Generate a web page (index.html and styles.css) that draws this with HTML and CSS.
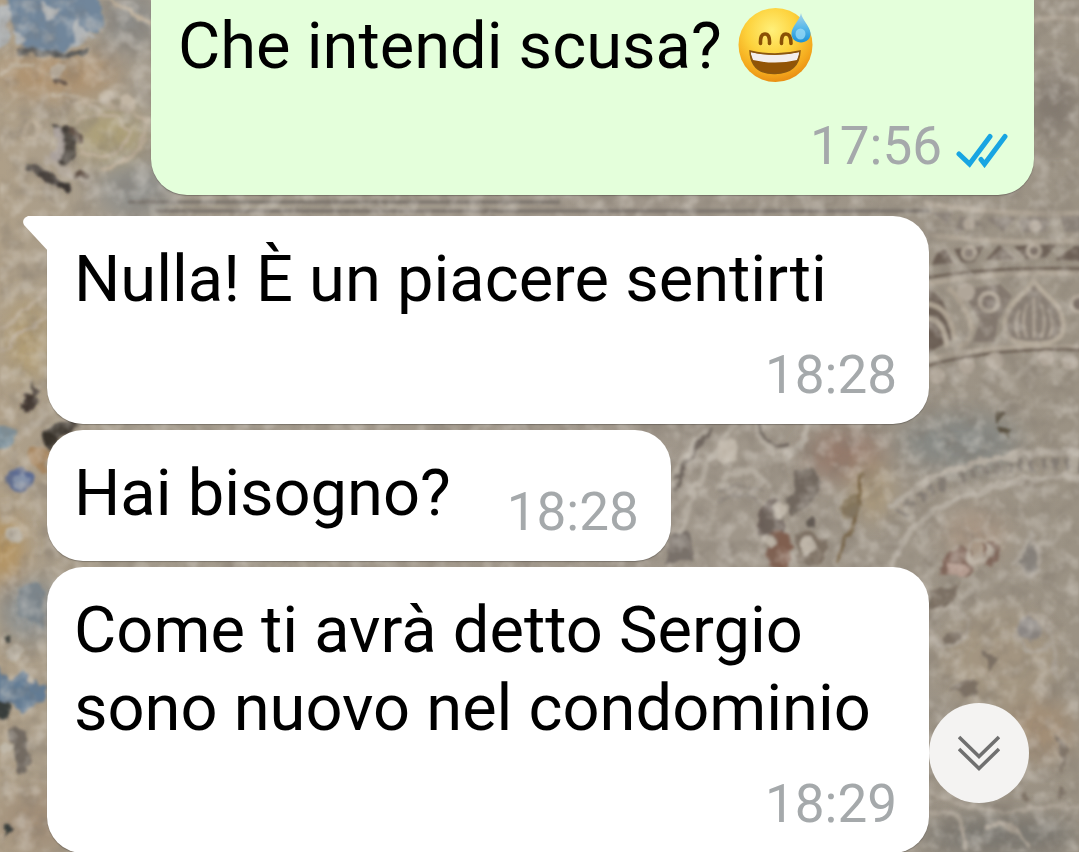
FILE: index.html
```html
<!DOCTYPE html>
<html lang="it">
<head>
<meta charset="utf-8">
<meta name="viewport" content="width=device-width, initial-scale=1">
<title>Chat</title>
<link rel="stylesheet" href="styles.css">
</head>
<body>
<svg class="wallpaper" viewBox="0 0 1079 852" preserveAspectRatio="xMidYMid slice" aria-hidden="true">
  <defs>
    <linearGradient id="stone" x1="0" x2="1" y1="0" y2="0">
      <stop offset="0" stop-color="#ae9f88"/><stop offset=".12" stop-color="#a59c8d"/>
      <stop offset=".6" stop-color="#a0978b"/><stop offset="1" stop-color="#9b9284"/>
    </linearGradient>
    <filter id="soft" x="-20%" y="-20%" width="140%" height="140%"><feGaussianBlur stdDeviation="1.4"/></filter>
    <filter id="wash" x="-40%" y="-40%" width="180%" height="180%"><feGaussianBlur stdDeviation="12"/></filter>
    <filter id="rough" filterUnits="userSpaceOnUse" x="-20" y="-20" width="1119" height="892">
      <feTurbulence type="fractalNoise" baseFrequency=".07" numOctaves="3" seed="4" result="n"/>
      <feDisplacementMap in="SourceGraphic" in2="n" scale="12" xChannelSelector="R" yChannelSelector="G"/>
      <feGaussianBlur stdDeviation="1.7"/>
    </filter>
    <filter id="mottle" x="0" y="0" width="100%" height="100%">
      <feTurbulence type="fractalNoise" baseFrequency=".05" numOctaves="4" seed="9"/>
      <feColorMatrix values="0 0 0 0 .2  0 0 0 0 .17  0 0 0 0 .14  2.4 0 0 0 -1.05"/>
      <feGaussianBlur stdDeviation="1.2"/>
    </filter>
    <filter id="chalk" x="0" y="0" width="100%" height="100%">
      <feTurbulence type="fractalNoise" baseFrequency=".06" numOctaves="3" seed="23"/>
      <feColorMatrix values="0 0 0 0 .8  0 0 0 0 .76  0 0 0 0 .7  0 2.6 0 0 -1.15"/>
      <feGaussianBlur stdDeviation="1.2"/>
    </filter>
    <g id="petal">
      <path d="M0-38C-7-22-32-16-29 12Q-27 26 0 26T29 12C32-16 7-22 0-38Z" fill="#8b8177" stroke="#b6ab9b" stroke-width="5"/>
      <path d="M0-20V20M-7-14Q-14 4-7 20M7-14Q14 4 7 20M-14-8Q-22 6-15 19M14-8Q22 6 15 19" fill="none" stroke="#b1a698" stroke-width="2.5"/>
    </g>
  </defs>
  <rect width="1079" height="852" fill="url(#stone)"/>
  <g filter="url(#wash)">
    <ellipse cx="60" cy="75" rx="60" ry="22" fill="#b08b62" opacity=".7"/>
    <ellipse cx="110" cy="135" rx="34" ry="26" fill="#ada078"/>
    <ellipse cx="135" cy="190" rx="38" ry="28" fill="#8f8f8b"/>
    <ellipse cx="130" cy="20" rx="30" ry="30" fill="#8d8c88"/>
    <ellipse cx="28" cy="340" rx="16" ry="40" fill="#b39d70"/>
    <ellipse cx="5" cy="550" rx="14" ry="35" fill="#b58f52"/>
    <ellipse cx="30" cy="610" rx="30" ry="30" fill="#8b9193"/>
    <ellipse cx="960" cy="442" rx="60" ry="28" fill="#858783"/>
    <ellipse cx="845" cy="455" rx="38" ry="24" fill="#94796b"/>
    <ellipse cx="872" cy="492" rx="18" ry="28" fill="#ae9b7b"/>
    <ellipse cx="975" cy="535" rx="30" ry="24" fill="#ac9986"/>
    <ellipse cx="1000" cy="660" rx="60" ry="50" fill="#a39581"/>
    <ellipse cx="1040" cy="730" rx="35" ry="30" fill="#a38e76"/>
    <ellipse cx="1000" cy="835" rx="80" ry="18" fill="#77746e"/>
    <ellipse cx="1055" cy="105" rx="22" ry="35" fill="#827970"/>
    <ellipse cx="40" cy="820" rx="40" ry="30" fill="#a18e78"/>
  </g>
  <g filter="url(#rough)">
    <path d="M8-5H95Q112 20 98 32L82 34 68 50Q40 58 22 46L10 20Z" fill="#71869b"/>
    <path d="M20 50Q45 58 86 52" fill="none" stroke="#535454" stroke-width="6"/>
    <path d="M40 0 60 10 50 22ZM76 14 86 34 97 38 72 46ZM10 28 26 36 18 46ZM-4 8 10 4 8 44-4 48Z" fill="#b1b5b7"/>
    <path d="M50 125Q66 140 55 163L66 170Q80 152 67 123Z" fill="#413b36"/>
    <path d="M57 127Q66 144 54 163" fill="none" stroke="#aaa19c" stroke-width="7"/>
    <path d="M31 168 66 186" stroke="#3a3430" stroke-width="9" stroke-linecap="round"/>
    <path d="M44 159 88 184" stroke="#b2a89b" stroke-width="6"/>
    <path d="M71 130 78 142M78 175 86 176M57 80 65 82" stroke="#5b4c40" stroke-width="7" stroke-linecap="round"/>
    <g fill="none" stroke="#bcad98" stroke-width="4">
      <circle cx="33" cy="131" r="8"/><path d="M50 93Q110 100 149 121M68 105Q83 98 101 111M77 125Q88 108 118 118Q137 136 118 151Q100 162 78 151M100 170Q145 160 146 124M0 75Q18 59 38 65M100-4Q126 7 152 24M0 330 48 290M0 350 48 315"/>
    </g>
    <g fill="#c2b6a4"><circle cx="106" cy="96" r="8"/><circle cx="128" cy="102" r="8"/><circle cx="57" cy="70" r="7"/></g>
    <path d="M32 380 42 391 31 402ZM25 392 40 403 27 412ZM22 400 30 406 22 410Z" fill="#423831"/>
    <path d="M42 435Q55 414 83 426L65 436 48 452Z" fill="#39322b"/>
    <path d="M30 445Q38 440 48 454V474Q36 473 28 460Z" fill="#a78660"/>
    <path d="M5 478Q15 458 31 475Q36 486 23 491Q8 493 5 478Z" fill="#5c6c94"/>
    <ellipse cx="20" cy="482" rx="8" ry="6" fill="#8492aa"/>
    <path d="M-4 424 17 430 12 448-4 446Z" fill="#7f939e"/>
    <path d="M18 590Q35 576 44 592V630L22 615Z" fill="#7b858b"/>
    <path d="M-4 667 13 680 20 670 46 687V700L20 713 10 704-4 700Z" fill="#647c94"/>
    <path d="M-4 700 10 704 8 718-4 715ZM3 636 8 634 10 640 3 643ZM3 825 14 829 3 838Z" fill="#393c3a"/>
    <path d="M10 728Q27 725 28 745 34 775 18 775Z" fill="#716960"/>
    <g fill="#c0b8a9"><circle cx="14" cy="653" r="8"/><circle cx="13" cy="534" r="8"/><circle cx="8" cy="748" r="6"/><circle cx="29" cy="679" r="4"/></g>
  </g>
  <g filter="url(#soft)">
    <path d="M128 202H560M155 211H930" stroke="#77716a" stroke-width="3"/>
    <g fill="none" stroke="#afa495" stroke-width="5">
      <path d="M925 203Q1000 216 1079 213M930 235Q1000 244 1079 241M925 284Q1000 270 1085 274M925 360Q1000 342 1085 348M1030 22Q1055 14 1085 20"/>
    </g>
    <path d="M925 278Q1000 266 1085 269M925 366Q1000 346 1085 350" fill="none" stroke="#6b5d51" stroke-width="3"/>
    <g fill="#6c5f55">
      <path d="M932 265Q937 248 946 250L953 263ZM954 249 984 246 974 262 962 263ZM986 260 999 245 1015 259ZM1014 246 1056 244 1046 257 1026 259ZM1055 260 1075 246H1085V261Z"/>
      <path d="M926 288Q942 295 946 310T955 338L926 354Z"/>
      <path d="M961 290 1000 284 1012 296 998 320 995 342H973L980 320Z" fill="#83786e"/>
    </g>
    <g fill="#8b8279"><path d="M932 213 952 212 948 224ZM960 216 984 224 955 232ZM986 218 1016 217 1003 232ZM1019 221Q1036 212 1050 221L1045 232 1023 232ZM1060 216H1085V232H1065Z"/></g>
    <path d="M948 288Q966 304 972 328Q971 343 958 348M926 318Q944 318 947 347M926 304Q950 305 955 340" fill="none" stroke="#aea393" stroke-width="5"/>
    <g fill="#7b7067" stroke="#b2a799" stroke-width="4"><circle cx="989" cy="302" r="9"/><circle cx="969" cy="253" r="6"/><circle cx="1034" cy="251" r="6"/><circle cx="1079" cy="304" r="8"/></g>
    <use href="#petal" x="1034" y="318"/>
    <g fill="#b0a699"><circle cx="966" cy="292" r="9"/><circle cx="967" cy="366" r="8"/><circle cx="995" cy="361" r="9"/><circle cx="1046" cy="358" r="8"/><circle cx="1070" cy="362" r="8"/><circle cx="969" cy="224" r="6"/><circle cx="1035" cy="226" r="6"/><circle cx="937" cy="376" r="8"/></g>
  </g>
  <g filter="url(#rough)">
    <path d="M995 410 1005 415 998 420ZM996 426 1012 429 1008 437 998 434Z" fill="#59503f"/>
    <g fill="none" stroke="#b4aca0" stroke-width="6">
      <path d="M675 562Q680 500 735 424M665 495Q685 450 712 424M889 508Q950 450 1085 452M892 566Q915 482 1085 475M758 421Q759 460 792 452Q810 438 808 420M720 485Q746 453 770 488"/>
    </g>
    <path d="M672 492Q688 455 712 425M760 423Q765 445 786 447" fill="none" stroke="#716861" stroke-width="4"/>
    <g fill="none" stroke="#837b73" stroke-width="12" stroke-dasharray="5 7"><path d="M960 478Q1010 460 1085 466M900 513Q920 493 950 482"/></g>
    <path d="M720 490Q740 482 762 492M720 500Q740 491 759 502" fill="none" stroke="#8b837a" stroke-width="3"/>
    <path d="M796 473Q812 460 823 478L811 505 795 514 784 501 795 492Z" fill="#6f665d"/>
    <path d="M758 510 774 497 783 510 785 528 770 543 758 533Z" fill="#6a5f59"/>
    <path d="M765 536Q784 525 792 544L790 568H768Z" fill="#805f50"/>
    <path d="M795 536Q820 526 829 547L820 563H796Z" fill="#7e7163"/>
    <path d="M863 470 858 510 835 564" fill="none" stroke="#76613f" stroke-width="4"/>
    <path d="M857 493 836 504 847 522 859 512Z" fill="#85765b"/>
    <path d="M664 562 670 535 688 531 697 562Z" fill="#79716a"/>
    <circle cx="811" cy="522" r="6" fill="#625a52"/>
    <g fill="#beb5a8"><circle cx="728" cy="451" r="11"/><circle cx="779" cy="511" r="7"/><circle cx="769" cy="540" r="7"/><circle cx="808" cy="546" r="8"/></g>
    <path d="M942 566Q950 545 970 549L977 568 966 580 940 574ZM980 540 996 542 1000 563 986 565Z" fill="#806558"/>
    <ellipse cx="958" cy="570" rx="11" ry="8" fill="#b69e92"/>
    <circle cx="978" cy="551" r="11" fill="none" stroke="#b6aa9c" stroke-width="4"/>
    <path d="M1029 532Q1027 548 1016 563 1025 583 1036 573 1045 563 1034 546Z" fill="#87827b" stroke="#aaa398" stroke-width="4"/>
    <path d="M930 590 960 584 950 606 930 610ZM944 636 960 632 958 644 944 645ZM948 692 960 680 977 682 977 695ZM983 652 999 655 990 672ZM1056 730 1066 750 1062 775ZM1025 788 1030 800 1024 803ZM1058 786 1066 795 1058 800Z" fill="#7c7063"/>
    <g fill="none" stroke="#aaa194" stroke-width="4"><circle cx="1034" cy="632" r="18"/><circle cx="948" cy="627" r="19"/><path d="M930 790Q970 822 1085 802M928 812Q972 806 967 850M985 830Q1010 812 1030 850M1040 620Q1060 640 1055 680"/></g>
    <ellipse cx="1028" cy="629" rx="13" ry="12" fill="#8c8784"/>
  </g>
  <rect width="1079" height="852" filter="url(#mottle)" opacity=".38"/>
  <rect width="1079" height="852" filter="url(#chalk)" opacity=".36"/>
</svg>

<main class="chat">
  <article class="bubble bubble-out">
    <p class="text">Che intendi scusa?
      <svg class="emoji" viewBox="6 8 76 76" role="img" aria-label="Faccina che ride sudando">
        <defs>
          <radialGradient id="face" cx=".45" cy=".3" r=".75"><stop offset="0" stop-color="#fff07a"/><stop offset=".45" stop-color="#fdd23c"/><stop offset=".78" stop-color="#f4a91d"/><stop offset="1" stop-color="#e58410"/></radialGradient>
          <linearGradient id="drop" x1="0" x2="0" y1="0" y2="1"><stop offset="0" stop-color="#a9d4e8"/><stop offset=".5" stop-color="#58b9ea"/><stop offset="1" stop-color="#1b91d8"/></linearGradient>
          <clipPath id="mouth"><path d="M18 51Q43 57 68 51Q67 73 43 73.500T18 51Z"/></clipPath>
        </defs>
        <circle cx="43.500" cy="45" r="37" fill="url(#face)"/>
        <path d="M28.500 43.500Q28 34 33 34T37.500 43.500M49.500 43.500Q49 34 54 34T59 43.500" fill="none" stroke="#8a5105" stroke-width="3.600" stroke-linecap="round"/>
        <g clip-path="url(#mouth)"><rect x="15" y="49" width="56" height="26" fill="#925406"/><path d="M18 52Q43 58 68 52L65 60Q43 65 21 60Z" fill="#f3eeee"/></g>
        <path d="M18 51Q43 57 68 51Q67 73 43 73.500T18 51Z" fill="none" stroke="#8b5710" stroke-width="1.500"/>
        <path d="M69 13C70 20 78 26 78.500 33C79 39 74 42.500 69 42.500S59 39 59.500 33C60 26 68 20 69 13Z" fill="url(#drop)"/>
        <ellipse cx="68.500" cy="34" rx="5" ry="5.500" fill="#9bdcf8" opacity=".75"/>
      </svg>
    </p>
    <footer class="meta">
      <time>17:56</time>
      <svg class="ticks" viewBox="15 21 52 35" role="img" aria-label="Letto"><path d="M18 42 28.500 52 49 24.500M40 47.500 43.500 52 64 24.500" fill="none" stroke="#18a5e2" stroke-width="5" stroke-linecap="round" stroke-linejoin="miter"/></svg>
    </footer>
  </article>

  <article class="bubble bubble-in bubble-first">
    <svg class="tail" viewBox="0 0 26 36" aria-hidden="true"><path d="M5 0H26V36L1 9Q-2 3 5 0Z" fill="#fff"/></svg>
    <p class="text">Nulla! È un piacere sentirti</p>
    <footer class="meta"><time>18:28</time></footer>
  </article>

  <article class="bubble bubble-in bubble-short">
    <p class="text">Hai bisogno?</p>
    <footer class="meta"><time>18:28</time></footer>
  </article>

  <article class="bubble bubble-in">
    <p class="text">Come ti avrà detto Sergio sono nuovo nel condominio</p>
    <footer class="meta"><time>18:29</time></footer>
  </article>
</main>

<button class="scroll-down" type="button" aria-label="Vai agli ultimi messaggi">
  <svg class="chevrons" viewBox="0 0 42 36" aria-hidden="true"><path d="M1 2 21 21.500 41 2M1 14 21 33.500 41 14" fill="none" stroke="#707070" stroke-width="3.600"/></svg>
</button>
</body>
</html>
```
FILE: styles.css
```css
* {
  box-sizing: border-box;
}

body {
  margin: 0;
  min-height: 100vh;
  overflow: hidden;
  background: #9c9186;
  color: #000;
  font-family: Roboto, "Liberation Sans", sans-serif;
}

.wallpaper {
  position: fixed;
  inset: 0;
  width: 100%;
  height: 100%;
}

.chat {
  position: relative;
  height: 100vh;
  overflow: hidden;
  display: flex;
  flex-direction: column;
  gap: 6px;
  padding: 0 45px 0 47px;
}

.bubble {
  position: relative;
  flex: none;
  display: flex;
  flex-direction: column;
  gap: 26px;
  padding: 24px 32px 18px 27px;
  border-radius: 36px;
  box-shadow: 0 1px 1px rgba(0, 0, 0, 0.25);
}

.bubble-in {
  margin-right: 105px;
  background: #fff;
}

.bubble-out {
  margin-left: 104px;
  padding-top: 7px;
  padding-right: 26px;
  border-radius: 0 0 36px 36px;
  background: #e4ffdb;
}

.bubble-out .text {
  height: 82px;
}

.bubble-first {
  margin-top: 15px;
  border-top-left-radius: 0;
}

.bubble-short {
  align-self: flex-start;
  flex-direction: row;
  gap: 56px;
  min-height: 131px;
}

.bubble-short .meta {
  align-self: flex-end;
}

.text {
  margin: 0;
  font-size: 65px;
  line-height: 78px;
}

.emoji {
  width: 76px;
  height: 76px;
  vertical-align: -16px;
}

.meta {
  display: flex;
  justify-content: flex-end;
  align-items: center;
  gap: 14px;
  font-size: 53px;
  line-height: 62px;
  color: #a5a9ab;
}

.ticks {
  width: 52px;
  height: 35px;
  margin-top: 8px;
}

.tail {
  position: absolute;
  top: 0;
  left: -24px;
  width: 26px;
  height: 36px;
}

.scroll-down {
  position: fixed;
  right: 50px;
  bottom: 49px;
  display: grid;
  place-items: center;
  width: 100px;
  height: 100px;
  padding: 0;
  border: 0;
  border-radius: 50%;
  background: #f4f3f2;
}

.chevrons {
  width: 42px;
  height: 36px;
}
```
